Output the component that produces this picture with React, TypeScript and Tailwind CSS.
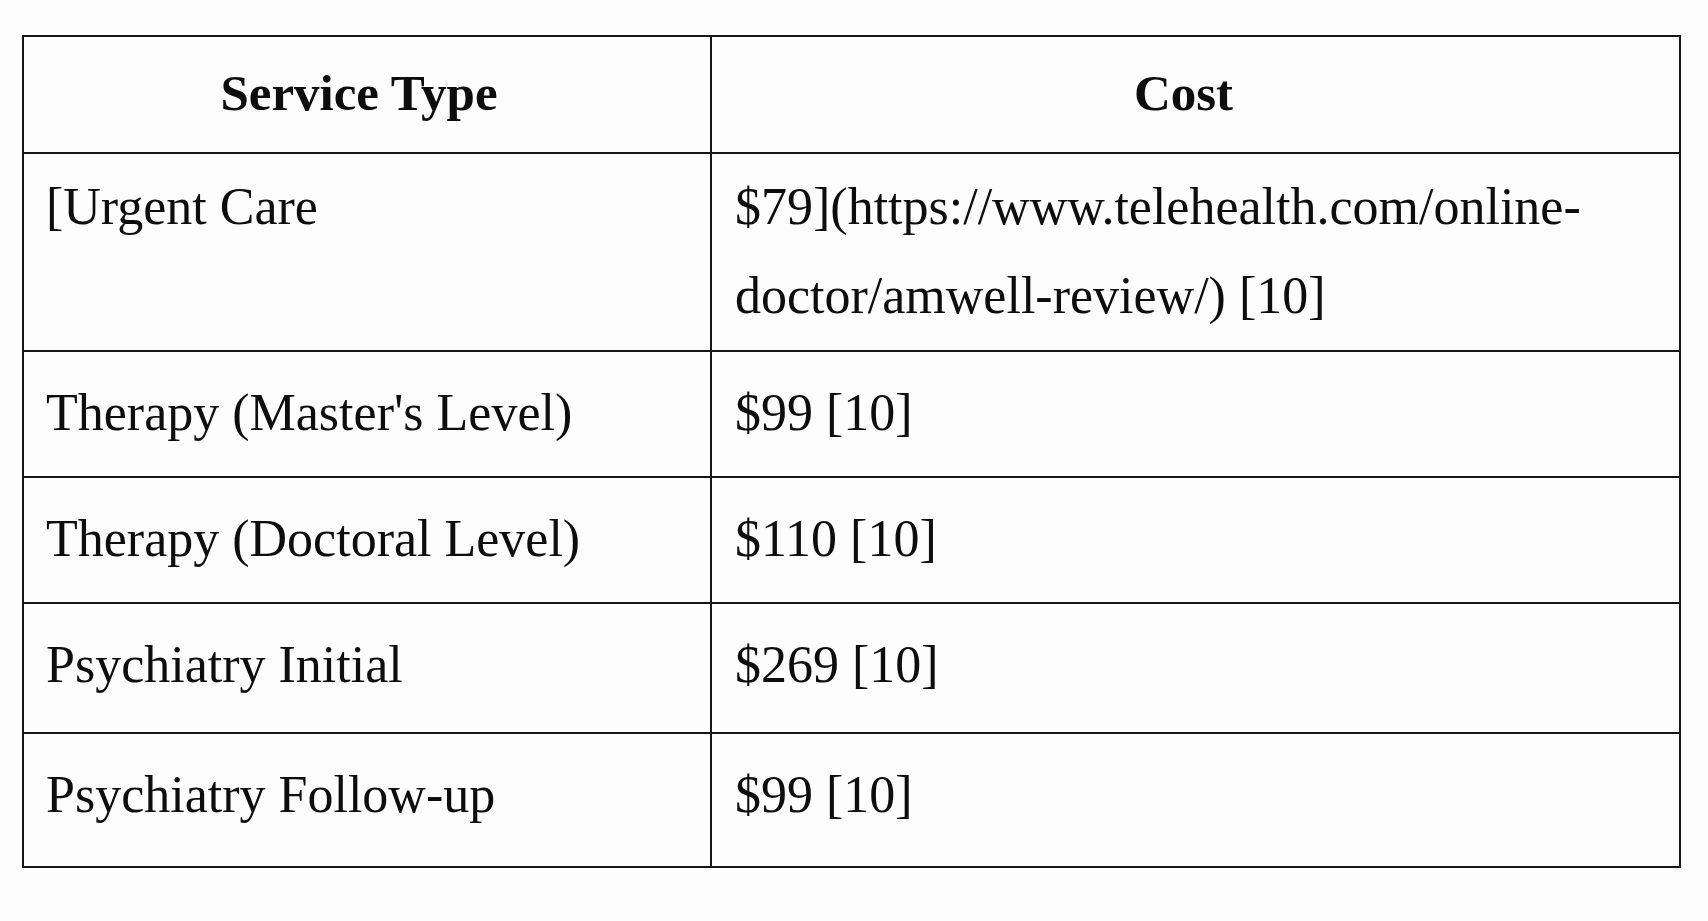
const rows = [
  { service: '[Urgent Care', cost: ['$79](https://www.telehealth.com/online-', 'doctor/amwell-review/) [10]'], h: 'h-[198px]', pt: 'pt-[8px]' },
  { service: "Therapy (Master's Level)", cost: ['$99 [10]'], h: 'h-[126px]', pt: 'pt-[16px]' },
  { service: 'Therapy (Doctoral Level)', cost: ['$110 [10]'], h: 'h-[126px]', pt: 'pt-[16px]' },
  { service: 'Psychiatry Initial', cost: ['$269 [10]'], h: 'h-[130px]', pt: 'pt-[16px]' },
  { service: 'Psychiatry Follow-up', cost: ['$99 [10]'], h: 'h-[134px]', pt: 'pt-[16px]' },
];

export default function App() {
  return (
    <div
      className="min-h-[921px] w-full bg-[#fdfdfd] pt-[35px] pl-[22px] text-[#0d0d0d]"
      style={{ fontFamily: '"Liberation Serif", "Times New Roman", serif' }}
    >
      <div className="w-[1659px] border-2 border-b-0 border-[#161616] leading-[89px]">
        {/* Header */}
        <div className="grid h-[117px] grid-cols-[688px_1fr] border-b-2 border-[#161616] text-[51px] font-bold">
          <div className="border-r-2 border-[#161616] pt-[12px] pr-[16px] text-center">Service Type</div>
          <div className="pt-[12px] pr-[24px] text-center">Cost</div>
        </div>

        {rows.map((row) => (
          <div key={row.service} className={`grid grid-cols-[688px_1fr] border-b-2 border-[#161616] text-[52px] ${row.h}`}>
            <div className={`border-r-2 border-[#161616] pl-[22px] ${row.pt}`}>{row.service}</div>
            <div className={`pl-[23px] ${row.pt}`}>
              {row.cost.map((line) => (
                <div key={line}>{line}</div>
              ))}
            </div>
          </div>
        ))}
      </div>
    </div>
  );
}
